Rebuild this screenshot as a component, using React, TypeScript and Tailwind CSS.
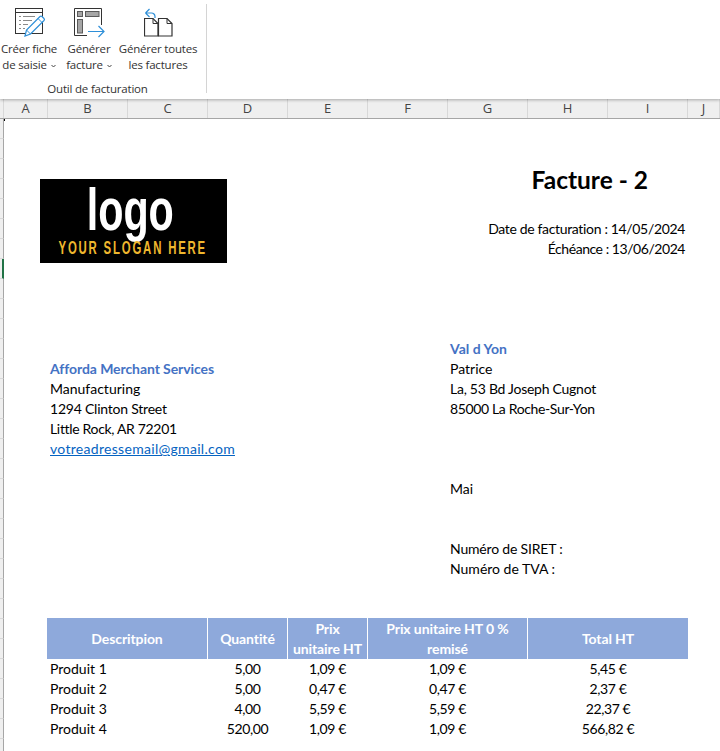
const sheetFont = "font-['Lato','Carlito','Liberation_Sans',sans-serif]";

function IconSheet() {
  return (
    <svg width="32" height="32" viewBox="0 0 32 32" fill="none">
      <rect x="0.5" y="0.5" width="27" height="25" fill="#fff" stroke="#333" />
      <path d="M1 4.500h26" stroke="#333" />
      <path d="M4 8.500h2M8 8.500h12M4 12.500h2M8 12.500h9M4 16.500h2M8 16.500h5M4 20.500h2M8 20.500h2" stroke="#8a8a8a" />
      <path d="M10 28l1.500-6L25 8.500a1.500 1.500 0 0 1 2 0l2 2a1.500 1.500 0 0 1 0 2L15.500 26z" fill="#fff" stroke="#2e8fd8" strokeWidth="1.2" />
      <path d="M23 10.500l4 4M11.500 22l4 4" stroke="#2e8fd8" />
    </svg>
  );
}

function IconInvoice() {
  return (
    <svg width="32" height="32" viewBox="0 0 32 32" fill="none">
      <path d="M27.500 17V.5H.5v27H13" stroke="#333" />
      <rect x="3.500" y="3.500" width="5" height="5" fill="#a6a6a6" stroke="#5a5a5a" />
      <rect x="11.500" y="3.500" width="13.500" height="5" fill="#a6a6a6" stroke="#5a5a5a" />
      <rect x="3.500" y="11.500" width="5" height="13.500" fill="#a6a6a6" stroke="#5a5a5a" />
      <path d="M14 23.500h15.500M24.500 18l5.500 5.500-5.500 5.500" stroke="#2e8fd8" strokeWidth="1.2" />
    </svg>
  );
}

function IconAll() {
  return (
    <svg width="32" height="32" viewBox="0 0 32 32" fill="none">
      <path d="M.5 10.500H9l5 5v12.500H.5z" fill="#fff" stroke="#333" strokeWidth="1.2" />
      <path d="M9 10.500V15.500h5" stroke="#333" />
      <path d="M14.500 10.500H23l5 5v12.500H14.500z" fill="#fff" stroke="#333" strokeWidth="1.2" />
      <path d="M23 10.500V15.500h5" stroke="#333" />
      <path d="M1.500 5h6A3.500 3.500 0 0 1 11 8.500V10M1.500 5l4-4M1.500 5l4 4" stroke="#2e8fd8" strokeWidth="1.2" />
    </svg>
  );
}

function Chevron() {
  return (
    <svg width="5" height="4" viewBox="0 0 5 4" className="ml-1 inline-block align-middle" fill="none">
      <path d="M.5 1L2.500 3 4.500 1" stroke="#444" />
    </svg>
  );
}

function RibbonButton({ width, iconClass, icon, lines }: { width: string; iconClass: string; icon: React.ReactNode; lines: React.ReactNode[] }) {
  return (
    <div className={`flex flex-col items-center ${width}`}>
      <div className={`h-[35px] pt-[4px] ${iconClass}`}>{icon}</div>
      <div className="mt-[2px] text-center text-[11.5px] leading-[16px] tracking-[-0.2px] whitespace-nowrap text-[#333]">
        {lines.map((l, i) => (
          <div key={i}>{l}</div>
        ))}
      </div>
    </div>
  );
}

function Ribbon() {
  return (
    <div className="relative z-10 flex h-[99px] bg-white font-['Open_Sans',sans-serif] shadow-[0_1px_3px_rgba(0,0,0,0.3)]">
      <div className="mt-[4px] flex h-[89px] w-[207px] flex-col border-r border-[#d4d4d4]">
        <div className="flex items-start">
          <RibbonButton width="w-[58px]" iconClass="ml-[4px]" icon={<IconSheet />} lines={["Créer fiche", <>de saisie<Chevron /></>]} />
          <RibbonButton width="w-[62px]" iconClass="ml-[2px]" icon={<IconInvoice />} lines={["Générer", <>facture<Chevron /></>]} />
          <RibbonButton width="w-[80px] -ml-[2px]" iconClass="ml-[4px]" icon={<IconAll />} lines={["Générer toutes", "les factures"]} />
        </div>
        <div className="mt-[8px] pr-[11px] text-center text-[11.5px] leading-[16px] tracking-[-0.2px] text-[#333]">Outil de facturation</div>
      </div>
    </div>
  );
}

const cols: [string, string][] = [
  ["", "w-[4px]"],
  ["A", "w-[44px]"],
  ["B", "w-[80px]"],
  ["C", "w-[80px]"],
  ["D", "w-[80px]"],
  ["E", "w-[80px]"],
  ["F", "w-[80px]"],
  ["G", "w-[80px]"],
  ["H", "w-[80px]"],
  ["I", "w-[80px]"],
  ["J", "w-[32px]"],
];

function ColumnHeaders() {
  return (
    <div className="flex h-[20px] border-b border-[#a6a6a6] bg-[#efefef] font-['Open_Sans',sans-serif]">
      {cols.map(([c, w]) => (
        <div key={c} className={`${w} shrink-0 border-r border-[#d8d8d8] text-center text-[13px] leading-[19px] text-[#444]`}>
          {c}
        </div>
      ))}
    </div>
  );
}

function Gutter() {
  return (
    <div className="flex w-[4px] shrink-0 flex-col bg-[#efefef]">
      {Array.from({ length: 32 }).map((_, i) => (
        <div
          key={i}
          className={`h-[20px] shrink-0 border-b border-b-[#d8d8d8] ${i === 7 ? "border-r-2 border-r-[#217346]" : "border-r border-r-[#a6a6a6]"}`}
        />
      ))}
    </div>
  );
}

function Line({ children, className = "" }: { children?: React.ReactNode; className?: string }) {
  return <div className={`h-[20px] text-[14px] leading-[20px] whitespace-nowrap ${className}`}>{children}</div>;
}

const rows = [
  ["Produit 1", "5,00", "1,09 €", "1,09 €", "5,45 €"],
  ["Produit 2", "5,00", "0,47 €", "0,47 €", "2,37 €"],
  ["Produit 3", "4,00", "5,59 €", "5,59 €", "22,37 €"],
  ["Produit 4", "520,00", "1,09 €", "1,09 €", "566,82 €"],
];

const widths = ["w-[161px]", "w-[80px]", "w-[80px]", "w-[160px]", "w-[160px]"];

function Logo() {
  return (
    <div className="flex h-[84px] w-[187px] flex-col items-center bg-black font-['Liberation_Sans',sans-serif]">
      <div className="mt-[4px] mr-[6px] h-[54px] text-[59px] leading-[54px] font-bold text-white">
        <span className="inline-block scale-x-[0.7]">logo</span>
      </div>
      <div className="mt-[1px] mr-[1px] text-[19px] leading-[20px] font-bold whitespace-nowrap text-[#efb72e]">
        <span className="inline-block scale-x-[0.6] tracking-[3px]">YOUR SLOGAN HERE</span>
      </div>
    </div>
  );
}

function Sheet() {
  return (
    <div className={`relative flex-1 overflow-hidden bg-white text-black ${sheetFont}`}>
      <div className="absolute top-0 left-0 h-[2px] w-[1px] bg-black" />
      <div className="flex h-[220px] items-start justify-between">
        <div className="mt-[60px] ml-[36px]">
          <Logo />
        </div>
        <div className="mr-[35px] flex flex-col items-end pt-[41px]">
          <div className="mr-[37px] h-[40px] text-[24.5px] leading-[40px] font-bold">Facture - 2</div>
          <div className="h-[19px]" />
          <Line className="tracking-[-0.34px]">Date de facturation : 14/05/2024</Line>
          <Line className="tracking-[-0.45px]">Échéance : 13/06/2024</Line>
        </div>
      </div>
      <div className="flex h-[279px]">
        <div className="ml-[46px] w-[400px] pt-[20px]">
          <Line className="font-bold tracking-[-0.08px] text-[#4472c4]">Afforda Merchant Services</Line>
          <Line>Manufacturing</Line>
          <Line className="tracking-[-0.22px]">1294 Clinton Street</Line>
          <Line className="tracking-[-0.33px]">Little Rock, AR 72201</Line>
          <Line className="tracking-[0.3px] text-[#0563c1] underline">votreadressemail@gmail.com</Line>
        </div>
        <div>
          <Line className="font-bold text-[#4472c4]">Val d Yon</Line>
          <Line>Patrice</Line>
          <Line className="tracking-[-0.26px]">La, 53 Bd Joseph Cugnot</Line>
          <Line className="tracking-[-0.36px]">85000 La Roche-Sur-Yon</Line>
          <div className="h-[60px]" />
          <Line>Mai</Line>
          <div className="h-[40px]" />
          <Line className="tracking-[-0.18px]">Numéro de SIRET :</Line>
          <Line>Numéro de TVA :</Line>
        </div>
      </div>
      <div className="ml-[43px] w-[641px]">
        <div className="flex h-[41px] bg-[#8ea9db] text-[14px] leading-[20px] font-bold tracking-[-0.1px] text-white">
          {["Descritpion", "Quantité", "Prix unitaire HT", "Prix unitaire HT 0 % remisé", "Total HT"].map((h, i) => (
            <div key={h} className={`${widths[i]} flex items-center justify-center border-r border-white px-1 text-center last:border-r-0`}>
              {h}
            </div>
          ))}
        </div>
        {rows.map((r) => (
          <div key={r[0]} className="flex h-[20px] text-[14px] leading-[20px]">
            {r.map((c, i) => (
              <div
                key={i}
                className={`${widths[i]} border-r border-transparent last:border-r-0 ${i === 0 ? "pl-[3px]" : "text-center tracking-[-0.4px]"}`}
              >
                {c}
              </div>
            ))}
          </div>
        ))}
      </div>
    </div>
  );
}

export default function App() {
  return (
    <div className="flex h-[751px] w-[720px] flex-col overflow-hidden bg-white">
      <Ribbon />
      <ColumnHeaders />
      <div className="flex min-h-0 flex-1">
        <Gutter />
        <Sheet />
      </div>
    </div>
  );
}
